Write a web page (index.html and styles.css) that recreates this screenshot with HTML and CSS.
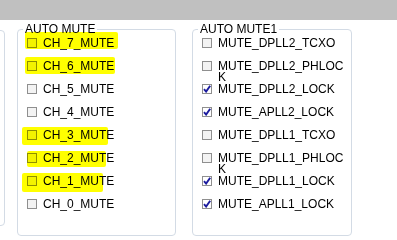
FILE: index.html
```html
<!DOCTYPE html>
<html lang="en">
<head>
    <meta charset="UTF-8">
    <title>Auto mute</title>
    <link rel="stylesheet" href="styles.css">
</head>
<body>

<div class="top-bar"></div>

<div class="panels">
    <fieldset class="group group-prev"></fieldset>

    <fieldset class="group">
        <legend>AUTO MUTE</legend>
        <div class="opts">
            <label class="opt"><span class="hl hl-7"></span><span class="box"></span><span class="txt">CH_7_MUTE</span></label>
            <label class="opt"><span class="hl hl-6"></span><span class="box"></span><span class="txt">CH_6_MUTE</span></label>
            <label class="opt"><span class="box"></span><span class="txt">CH_5_MUTE</span></label>
            <label class="opt"><span class="box"></span><span class="txt">CH_4_MUTE</span></label>
            <label class="opt"><span class="hl hl-3"></span><span class="box"></span><span class="txt">CH_3_MUTE</span></label>
            <label class="opt"><span class="hl hl-2"></span><span class="box"></span><span class="txt">CH_2_MUTE</span></label>
            <label class="opt"><span class="hl hl-1"></span><span class="box"></span><span class="txt">CH_1_MUTE</span></label>
            <label class="opt"><span class="box"></span><span class="txt">CH_0_MUTE</span></label>
        </div>
    </fieldset>

    <fieldset class="group group-last">
        <legend>AUTO MUTE1</legend>
        <div class="opts">
            <label class="opt"><span class="box"></span><span class="txt">MUTE_DPLL2_TCXO</span></label>
            <label class="opt"><span class="box"></span><span class="txt">MUTE_DPLL2_PHLOCK</span></label>
            <label class="opt"><span class="box checked"><svg viewBox="0 0 8 8" width="8" height="8"><path d="M1 4.2 L3.1 6.6 L7.2 0.8" /></svg></span><span class="txt">MUTE_DPLL2_LOCK</span></label>
            <label class="opt"><span class="box checked"><svg viewBox="0 0 8 8" width="8" height="8"><path d="M1 4.2 L3.1 6.6 L7.2 0.8" /></svg></span><span class="txt">MUTE_APLL2_LOCK</span></label>
            <label class="opt"><span class="box"></span><span class="txt">MUTE_DPLL1_TCXO</span></label>
            <label class="opt"><span class="box"></span><span class="txt">MUTE_DPLL1_PHLOCK</span></label>
            <label class="opt"><span class="box checked"><svg viewBox="0 0 8 8" width="8" height="8"><path d="M1 4.2 L3.1 6.6 L7.2 0.8" /></svg></span><span class="txt">MUTE_DPLL1_LOCK</span></label>
            <label class="opt"><span class="box checked"><svg viewBox="0 0 8 8" width="8" height="8"><path d="M1 4.2 L3.1 6.6 L7.2 0.8" /></svg></span><span class="txt">MUTE_APLL1_LOCK</span></label>
        </div>
    </fieldset>
</div>

</body>
</html>
```

FILE: styles.css
```css
body {
    margin: 0;
    background-color: white;
    font-family: 'Liberation Sans', Arial, sans-serif;
    font-size: 12px;
    color: #000;
    overflow: hidden;
}

.top-bar {
    height: 20px;
    background-color: #c0c0c0;
}

.panels {
    display: flex;
    align-items: flex-start;
    margin-left: -155px;
}

.group {
    box-sizing: border-box;
    width: 159px;
    min-width: 0;
    margin: 3px 0 0 12px;
    padding: 0 4px 24px 9px;
    border: 1px solid #d3dbe5;
    border-radius: 4px;
}

.group-prev {
    width: 160px;
    height: 196px;
    margin: 10px 0 0 0;
}

.group-last {
    width: 160px;
    margin-left: 16px;
}

legend {
    margin-left: -4px;
    padding: 0 2px;
    line-height: 13px;
}

.opts {
    display: flex;
    flex-direction: column;
    gap: 9px;
}

.opt {
    position: relative;
    display: flex;
    align-items: center;
    height: 14px;
}

.box {
    box-sizing: border-box;
    flex: none;
    width: 10px;
    height: 10px;
    margin-right: 6px;
    border: 1px solid #8f8f8f;
    background-color: #f3f3f3;
}

.box.checked {
    background-color: white;
}

.box svg {
    display: block;
}

.box path {
    fill: none;
    stroke: #1b1b9e;
    stroke-width: 1.9;
}

.txt {
    min-width: 0;
    height: 11px;
    line-height: 11px;
    word-break: break-all;
}

/* highlighter marks */
.hl {
    position: absolute;
    background-color: #ffff00;
    mix-blend-mode: multiply;
    border-radius: 2px;
}

.hl-7 { left: -2px; top: -4px; width: 93px; height: 17px; }
.hl-6 { left: -2px; top: -2px; width: 90px; height: 17px; }
.hl-3 { left: -5px; top: -1px; width: 86px; height: 18px; }
.hl-2 { left: 0; top: 0; width: 79px; height: 16px; }
.hl-1 { left: -5px; top: -1px; width: 81px; height: 19px; }
```
